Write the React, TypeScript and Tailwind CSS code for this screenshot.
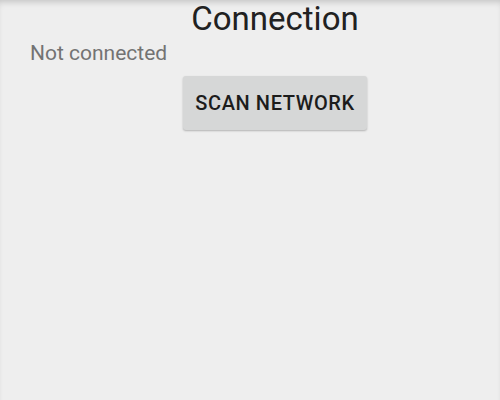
export default function App() {
    return (
        <div
            className="w-[500px] h-[400px] bg-[#eeeeee] shadow-[inset_0_5px_6px_-3px_rgba(0,0,0,0.18)] flex flex-col"
            style={{ fontFamily: 'Roboto, "Liberation Sans", sans-serif' }}
        >
            <div className="flex flex-col items-center pl-[50px]">
                <h1 className="text-[33px] leading-[37px] text-[#212121] font-normal">Connection</h1>
            </div>
            <p className="mt-[4px] ml-[30px] text-[21px] leading-[25px] text-[#737373]">Not connected</p>
            <div className="flex flex-col items-center pl-[50px] mt-[10px]">
                <button className="w-[184px] h-[54px] rounded-[3px] bg-[#d6d7d7] shadow-[0_1px_2px_rgba(0,0,0,0.25)] text-[20px] tracking-[0.6px] font-medium text-[#1c1c1c] flex items-center justify-center">
                    SCAN NETWORK
                </button>
            </div>
        </div>
    )
}
